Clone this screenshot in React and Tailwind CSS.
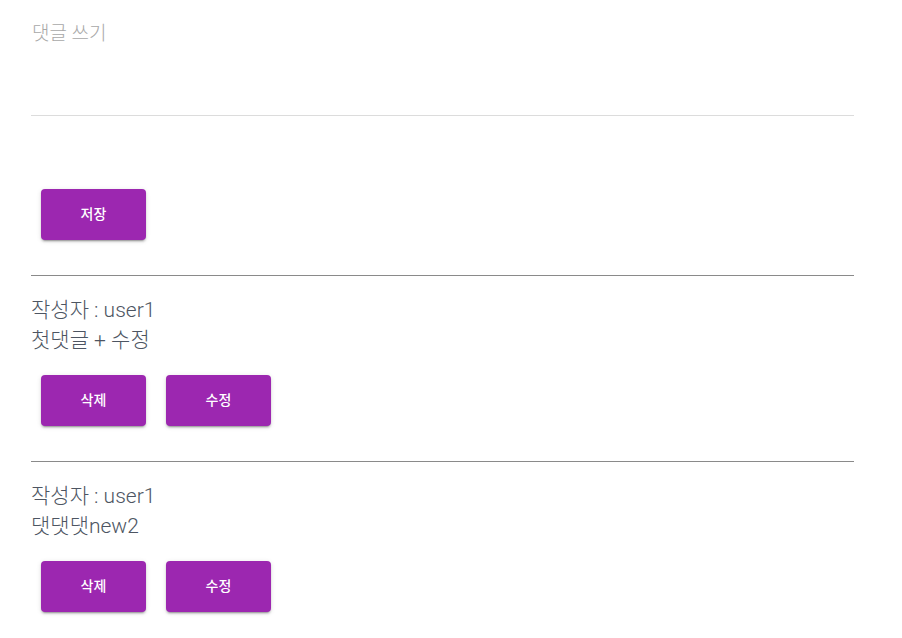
const comments = [
  { id: 1, writer: 'user1', content: '첫댓글 + 수정' },
  { id: 2, writer: 'user1', content: '댓댓댓new2' },
];

function PurpleButton({ children }) {
  return (
    <button className="w-[105px] h-[51px] rounded-[4px] bg-[#9c27b0] text-white text-[14px] font-medium shadow-[0_3px_1px_-2px_rgba(0,0,0,0.2),0_2px_2px_0_rgba(0,0,0,0.14),0_1px_5px_0_rgba(0,0,0,0.12)]">
      {children}
    </button>
  );
}

export default function App() {
  return (
    <div className="w-[854px] pl-[31px] bg-white font-['Roboto','Noto_Sans_CJK_KR',sans-serif]">
      {/* 댓글 입력 */}
      <div className="h-[116px] border-b border-[#dcdcdc] pt-[20px]">
        <textarea
          className="w-full h-[80px] resize-none outline-none text-[19px] font-light leading-[28px] pl-[1px] text-[#4b5563] placeholder:text-[#a8a8a8]"
          placeholder="댓글 쓰기"
        />
      </div>

      <div className="mt-[63px] p-[10px]">
        <PurpleButton>저장</PurpleButton>
      </div>

      {/* 댓글 목록 */}
      {comments.map(c => (
        <div key={c.id} className="mt-[25px] border-t border-[#8a8a8a]">
          <div className="pt-[19px] text-[21px] font-light leading-[30px] text-[#4d5562]">
            <p>작성자 : {c.writer}</p>
            <p>{c.content}</p>
          </div>
          <div className="mt-[10px] p-[10px] flex gap-[20px]">
            <PurpleButton>삭제</PurpleButton>
            <PurpleButton>수정</PurpleButton>
          </div>
        </div>
      ))}
    </div>
  );
}
